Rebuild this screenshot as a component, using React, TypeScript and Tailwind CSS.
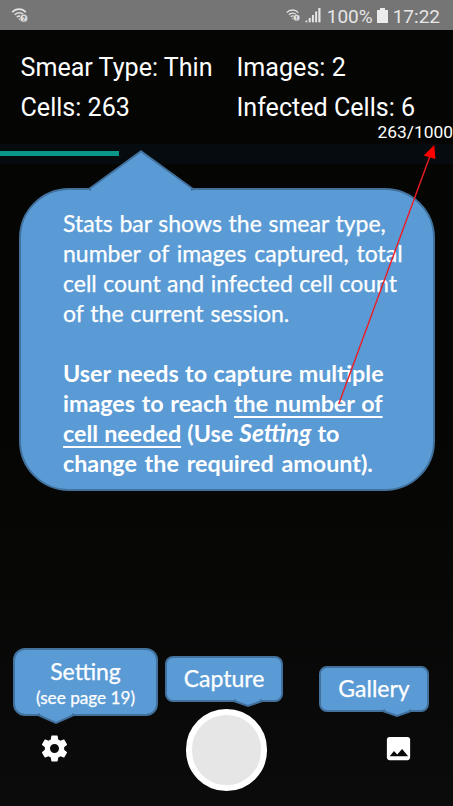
import type { ReactNode } from "react";

const calloutFont = "font-['Lato','Open_Sans',sans-serif] [-webkit-text-stroke:0.25px_#fff]";

function StatusWifi({ mark }: { mark: string }) {
  return (
    <svg viewBox="0 0 18 16" className="h-4 w-[18px]" fill="none" stroke="#e2e2e2">
      <path d="M1.2 5.2C4.8 1.1 11.2 1.1 14.8 5.2" strokeWidth="1.7" />
      <path d="M3.7 7.8C6.1 5.1 9.9 5.1 12.3 7.4" strokeWidth="1.6" />
      <path d="M5.9 10.2C7.1 8.9 8.6 8.8 9.8 9.6" strokeWidth="1.5" />
      <path d="M7.2 11.6h1.8v2z" fill="#e2e2e2" stroke="none" />
      <circle cx="12.8" cy="11.2" r="3.9" fill="#e2e2e2" stroke="#757575" strokeWidth="0.6" />
      <text x="12.8" y="13.6" textAnchor="middle" fontSize="6.5" fontWeight="700" fill="#6b6b6b" stroke="none" fontFamily="Roboto, sans-serif">
        {mark}
      </text>
    </svg>
  );
}

function StatusBar() {
  return (
    <header className="flex h-[30px] items-center bg-[#757575] pl-[11px] pr-[13px] text-[19px] leading-[30px] text-[#e6e6e6]">
      <StatusWifi mark="?" />
      <div className="ml-auto flex items-center">
        <div className="origin-right scale-[0.85]">
          <StatusWifi mark="!" />
        </div>
        <svg viewBox="0 0 16 16" className="ml-[4px] h-4 w-4" fill="#e6e6e6">
          <rect x="0.5" y="13.5" width="1.8" height="1.8" />
          <rect x="3.7" y="11" width="2" height="4.3" />
          <rect x="6.9" y="8" width="2" height="7.3" />
          <rect x="10.1" y="4.5" width="2" height="10.8" />
          <rect x="13.3" y="1" width="2.2" height="14.3" />
        </svg>
        <span className="ml-[5.500px] mt-[3px]">100%</span>
        <svg viewBox="0 0 11 15" className="ml-1 h-[15px] w-[11px]" fill="#ececec">
          <path d="M3 0h5v2h3v13H0V2h3z" />
        </svg>
        <span className="ml-[5px] mt-[3px]">17:22</span>
      </div>
    </header>
  );
}

function Stats() {
  return (
    <section className="h-[114px] pt-[18px] text-white">
      <div className="grid grid-cols-[216px_1fr] pl-[20.500px] text-[25.100px] leading-10 whitespace-nowrap">
        <span>Smear Type: Thin</span>
        <span>Images: 2</span>
        <span>Cells: 263</span>
        <span>Infected Cells: 6</span>
      </div>
      <div className="-mt-[6px] text-right text-[17.400px] leading-5">263/1000</div>
    </section>
  );
}

function Tail({ className, points, box }: { className: string; points: string; box: string }) {
  return (
    <svg viewBox={box} className={"absolute " + className} fill="#5b9bd5" stroke="#41719c" strokeWidth="2" overflow="visible">
      <polygon points={points} stroke="none" />
      <polyline points={points} />
    </svg>
  );
}

function Line({ className, children }: { className?: string; children: ReactNode }) {
  return <span className={"block whitespace-pre " + (className ?? "")}>{children}</span>;
}

function StatsCallout() {
  return (
    <section
      className={
        "relative ml-[19px] mt-6 h-[303px] w-[416px] rounded-[50px] border-2 border-[#41719c] bg-[#5b9bd5] pl-[42px] pt-[18px] text-[23px] leading-[30px] text-white " +
        calloutFont
      }
    >
      <Tail className="left-[68px] -top-[41px] h-[42px] w-[104px]" box="0 0 104 42" points="2,41 0,40 52,2.2 104,40 102,41" />
      <p>
        <Line className="[word-spacing:0.8px]">Stats bar shows the smear type,</Line>
        <Line className="[word-spacing:2px]">number of images captured, total</Line>
        <Line className="[word-spacing:0.5px]">cell count and infected cell count</Line>
        <Line className="[word-spacing:1px]">of the current session.</Line>
      </p>
      <p className="mt-[30px] text-[23.300px] font-bold [-webkit-text-stroke:0px]">
        <Line className="[word-spacing:0.8px]">User needs to capture multiple</Line>
        <Line className="[word-spacing:1px]">
          images to reach <u className="decoration-2 underline-offset-[4px]">the number of</u>
        </Line>
        <Line className="[word-spacing:0.5px]">
          <u className="decoration-2 underline-offset-[4px]">cell needed</u> (Use <em className="text-[24.500px] leading-[1]">Setting</em> to
        </Line>
        <Line className="[word-spacing:2.1px]">change the required amount).</Line>
      </p>
      <svg viewBox="0 0 100 264" className="absolute left-[316px] -top-[46.500px] h-[264px] w-[100px]" overflow="visible">
        <path d="M1.8 260L93 12" stroke="#ed1c24" strokeWidth="1.4" />
        <path d="M97.3 1L86.700 11.500L98.4 15z" fill="#ff0000" />
      </svg>
    </section>
  );
}

function Controls() {
  const bubble = "relative border-2 border-[#41719c] bg-[#5b9bd5] text-center text-[23px] text-white " + calloutFont;
  return (
    <footer className="mt-[157px] flex h-[158px] items-start">
      <div className="ml-[13px] w-[145px]">
        <div className={bubble + " h-[68px] rounded-[12px] pt-[6px]"}>
          <div className="leading-[30px]">Setting</div>
          <div className="text-[17.200px] leading-[24px]">(see page 19)</div>
          <Tail className="left-[23px] top-[64px] h-[10px] w-[36px]" box="0 0 36 10" points="2,0 0,1 18,8.8 36,1 34,0" />
        </div>
        <button className="ml-[25.500px] mt-[16.500px] block" aria-label="Settings">
          <svg viewBox="0 0 24 24" className="h-[31px] w-[31px]" fill="#fff">
            <path d="M19.43 12.98c.04-.32.07-.64.07-.98s-.03-.66-.07-.98l2.11-1.65c.19-.15.24-.42.12-.64l-2-3.46c-.12-.22-.39-.3-.61-.22l-2.49 1c-.52-.4-1.08-.73-1.69-.98l-.38-2.65C14.46 2.18 14.25 2 14 2h-4c-.25 0-.46.18-.49.42l-.38 2.65c-.61.25-1.17.59-1.69.98l-2.49-1c-.23-.09-.49 0-.61.22l-2 3.46c-.13.22-.07.49.12.64l2.11 1.65c-.04.32-.07.65-.07.98s.03.66.07.98l-2.11 1.65c-.19.15-.24.42-.12.64l2 3.46c.12.22.39.3.61.22l2.49-1c.52.4 1.08.73 1.69.98l.38 2.65c.03.24.24.42.49.42h4c.25 0 .46-.18.49-.42l.38-2.65c.61-.25 1.17-.59 1.69-.98l2.49 1c.23.09.49 0 .61-.22l2-3.46c.12-.22.07-.49-.12-.64l-2.11-1.65zM12 15.5c-1.93 0-3.5-1.57-3.5-3.5s1.57-3.5 3.5-3.5 3.5 1.57 3.5 3.5-1.57 3.5-3.5 3.5z" />
          </svg>
        </button>
      </div>
      <div className="ml-[7px] mt-[8px] w-[118px]">
        <div className={bubble + " z-10 h-[46px] rounded-[8px] leading-[40px]"}>
          Capture
          <Tail className="left-[67px] top-[42px] h-[7px] w-[28px]" box="0 0 28 7" points="2,0 0,1 14,6 28,1 26,0" />
        </div>
        <button
          className="ml-[21px] mt-[7px] block h-[82px] w-[81px] rounded-full border-[6px] border-white bg-[#e6e6e6]"
          aria-label="Capture"
        />
      </div>
      <div className="ml-[36px] mt-[18px] w-[110px]">
        <div className={bubble + " h-[46px] rounded-[8px] leading-[40px]"}>
          Gallery
          <Tail className="left-[62px] top-[42px] h-[7px] w-[28px]" box="0 0 28 7" points="2,0 0,1 14,6 28,1 26,0" />
        </div>
        <button className="ml-[64px] mt-[20.500px] block" aria-label="Gallery">
          <svg viewBox="0 0 24 24" className="h-[31px] w-[31px]" fill="#fff">
            <path d="M21 19V5c0-1.1-.9-2-2-2H5c-1.1 0-2 .9-2 2v14c0 1.1.9 2 2 2h14c1.1 0 2-.9 2-2zM8.500 14l2.500 2.600L14.800 12.400l4.700 5.600H5.200l3.300-4z" />
          </svg>
        </button>
      </div>
    </footer>
  );
}

export default function App() {
  return (
    <main className="h-[806px] w-[453px] overflow-hidden bg-linear-to-b from-[#050504] via-[#050504] to-[#0b0b0b] font-['Roboto',sans-serif]">
      <StatusBar />
      <Stats />
      <div className="h-5 bg-[#060b0f] pt-[7px]">
        <div className="h-[5px] w-[119px] bg-[#0a9688]" />
      </div>
      <StatsCallout />
      <Controls />
    </main>
  );
}
